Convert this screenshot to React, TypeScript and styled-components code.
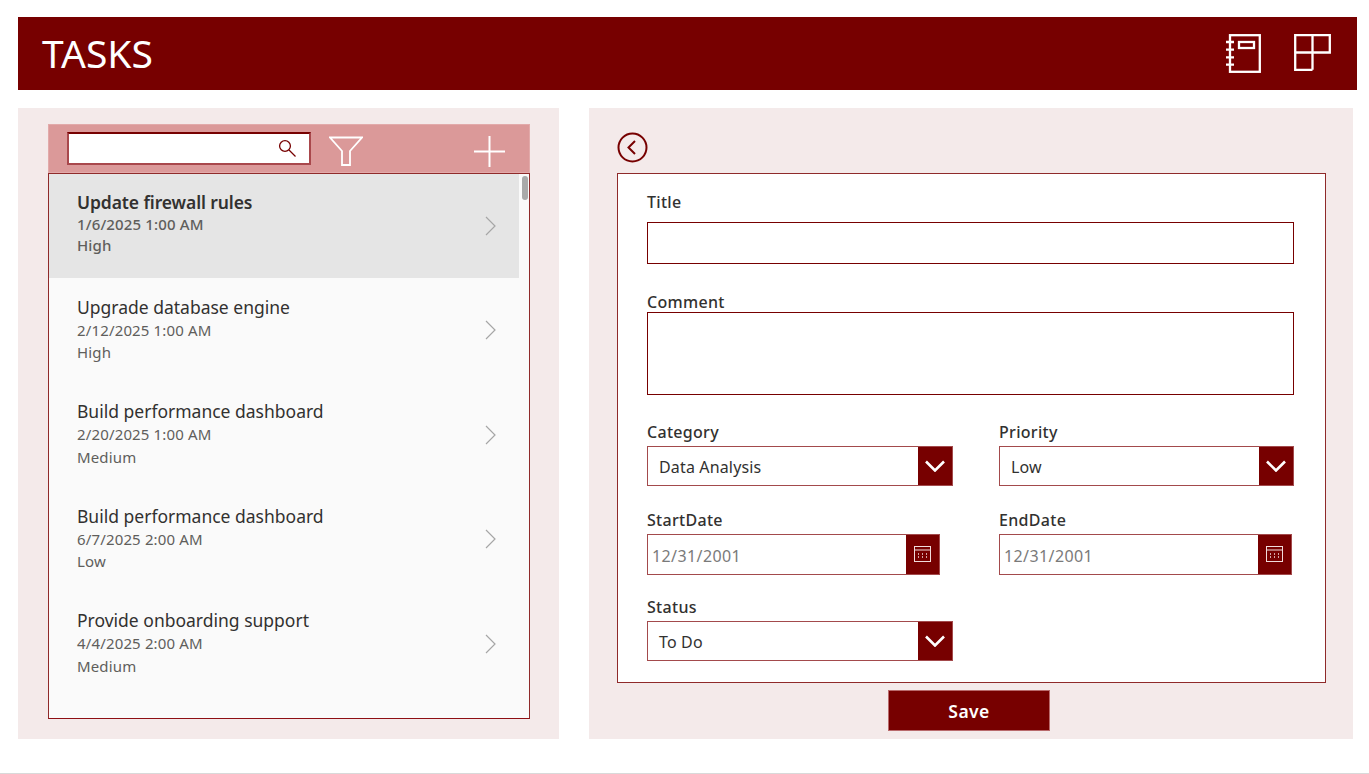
import React from "react";
import styled, { createGlobalStyle } from "styled-components";

const maroon = "#770000";
const line = "#8f2a2a";

const GlobalStyle = createGlobalStyle`
  html, body {
    margin: 0;
    padding: 0;
    background: #ffffff;
    font-family: "Noto Sans", "Open Sans", "Liberation Sans", sans-serif;
    overflow: hidden;
  }
`;

const Screen = styled.div`
  width: 1369px;
  height: 774px;
  box-sizing: border-box;
  padding: 17px 12px 0 18px;
  border-bottom: 1px solid #d9d9d9;
`;

const Header = styled.header`
  height: 73px;
  width: 1339px;
  box-sizing: border-box;
  background: ${maroon};
  color: #fff;
  display: flex;
  align-items: center;
  justify-content: space-between;
  padding: 0 26px 0 24px;
`;

const AppTitle = styled.h1`
  margin: -2px 0 0;
  font-size: 39px;
  font-weight: 400;
`;

const HeaderIcons = styled.div`
  display: flex;
  align-items: flex-start;
  gap: 33px;
  margin-top: -1px;
`;

const Columns = styled.div`
  display: flex;
  gap: 30px;
  margin-top: 18px;
  height: 631px;
`;

const LeftPanel = styled.section`
  width: 541px;
  box-sizing: border-box;
  background: #f4eaea;
  padding: 16px 29px 20px 30px;
  display: flex;
  flex-direction: column;
`;

const Toolbar = styled.div`
  height: 49px;
  box-sizing: border-box;
  background: #db9999;
  border: 1px solid #e2aaaa;
  display: flex;
  align-items: center;
  padding: 0 24px 0 18px;
`;

const SearchBox = styled.div`
  width: 244px;
  height: 33px;
  box-sizing: border-box;
  background: #fff;
  border: 2px solid #a9484c;
  border-top-color: ${maroon};
  display: flex;
  align-items: center;
  justify-content: flex-end;
  padding-right: 12px;
`;

const FilterButton = styled.div`
  display: flex;
  margin: 5px 0 0 18px;
`;

const AddButton = styled.div`
  display: flex;
  margin: 5px 0 0 auto;
`;

const ListBox = styled.div`
  flex: 1;
  position: relative;
  background: #fafafa;
  border: 1px solid ${line};
  border-bottom-color: #8e0f14;
  overflow: hidden;
`;

const Row = styled.div<{ $selected?: boolean }>`
  width: 470px;
  height: ${(p) => (p.$selected ? 103.5 : 104.5)}px;
  margin-bottom: ${(p) => (p.$selected ? 1 : 0)}px;
  box-sizing: border-box;
  padding: 16px 23px 0 28px;
  display: flex;
  align-items: flex-start;
  justify-content: space-between;
  background: ${(p) => (p.$selected ? "#e5e5e5" : "transparent")};
`;

const RowText = styled.div`
  display: flex;
  flex-direction: column;
`;

const RowTitle = styled.div<{ $selected?: boolean }>`
  font-size: 17.5px;
  line-height: 24px;
  color: #323130;
  letter-spacing: ${(p) => (p.$selected ? -0.1 : 0)}px;
  font-weight: ${(p) => (p.$selected ? 600 : 400)};
`;

const RowMeta = styled.div<{ $selected?: boolean }>`
  font-size: 15px;
  line-height: ${(p) => (p.$selected ? 21 : 22.5)}px;
  color: #605e5c;
  letter-spacing: 0.15px;
  font-weight: ${(p) => (p.$selected ? 500 : 400)};
`;

const Chevron = styled.div`
  display: flex;
  margin-top: 25.5px;
`;

const ScrollThumb = styled.div`
  position: absolute;
  top: 2px;
  right: 1px;
  width: 6px;
  height: 24px;
  border-radius: 3px;
  background: #a9a9a9;
`;

const RightPanel = styled.section`
  width: 764px;
  box-sizing: border-box;
  background: #f4eaea;
  padding: 24px 27px 0 28px;
`;

const BackButton = styled.div`
  display: flex;
  height: 41px;
`;

const FormBox = styled.form`
  width: 709px;
  height: 510px;
  box-sizing: border-box;
  background: #fff;
  border: 1px solid ${line};
  padding: 17px 31px 0 29px;
`;

const Label = styled.label`
  display: block;
  font-size: 16px;
  line-height: 22px;
  font-weight: 500;
  color: #323130;
  letter-spacing: 0.3px;
`;

const TextBox = styled.div<{ $height: number; $gap: number; $after: number }>`
  height: ${(p) => p.$height}px;
  box-sizing: border-box;
  border: 1px solid ${maroon};
  margin-top: ${(p) => p.$gap}px;
  margin-bottom: ${(p) => p.$after}px;
`;

const FieldGrid = styled.div`
  display: grid;
  grid-template-columns: 352px 295px;
  grid-auto-rows: 87.5px;
`;

const Field = styled.div`
  display: flex;
  flex-direction: column;
  align-items: flex-start;
`;

const Control = styled.div<{ $width: number; $height: number }>`
  width: ${(p) => p.$width}px;
  height: ${(p) => p.$height}px;
  margin-top: 3px;
  box-sizing: border-box;
  border: 1px solid #a34a4c;
  display: flex;
  align-items: stretch;
  font-size: 16px;
  color: #323130;
`;

const ControlText = styled.div<{ $muted?: boolean }>`
  flex: 1;
  display: flex;
  align-items: center;
  padding: ${(p) => (p.$muted ? "3px 0 0 4px" : "1px 0 0 11px")};
  color: ${(p) => (p.$muted ? "#7a7a7a" : "#323130")};
  letter-spacing: ${(p) => (p.$muted ? 0.4 : 0.15)}px;
`;

const ControlButton = styled.div<{ $width: number }>`
  width: ${(p) => p.$width}px;
  background: ${maroon};
  display: flex;
  align-items: center;
  justify-content: center;
`;

const SaveRow = styled.div`
  display: flex;
  justify-content: center;
  margin-top: 7px;
  padding-right: 6px;
`;

const SaveButton = styled.button`
  width: 162px;
  height: 41px;
  background: ${maroon};
  border: 1px solid #b96a6c;
  color: #fff;
  font-family: inherit;
  font-size: 17.5px;
  font-weight: 600;
  letter-spacing: 0.4px;
  padding: 0 0 0 1px;
`;

const NotebookIcon = () => (
  <svg width="35" height="39" viewBox="0 0 35 39" fill="none" stroke="#fff" strokeWidth="2.3">
    <rect x="4" y="1.2" width="29.8" height="36.6" />
    <rect x="13" y="8" width="15" height="6" />
    <path d="M0 8h8M0 15.7h8M0 23.3h8M0 30.7h8" />
  </svg>
);

const LayoutIcon = () => (
  <svg width="37" height="37" viewBox="0 0 37 37" fill="none" stroke="#fff" strokeWidth="2.3">
    <path d="M1.2 1.2h34.6v17.3H1.2zM18.5 1.2v34.6M1.2 18.5v17.3h17.3" />
  </svg>
);

const SearchIcon = () => (
  <svg width="19" height="19" viewBox="0 0 19 19" fill="none" stroke={maroon} strokeWidth="1.3">
    <circle cx="7" cy="7" r="5.4" />
    <path d="M11 11l6.5 6.5" />
  </svg>
);

const FilterIcon = () => (
  <svg width="34" height="30" viewBox="0 0 34 30" fill="none" stroke="#fff" strokeWidth="1.8">
    <path d="M1 1.5h32L21 15v14h-8V15z" />
  </svg>
);

const PlusIcon = () => (
  <svg width="31" height="31" viewBox="0 0 31 31" stroke="#fff" strokeWidth="2">
    <path d="M0 15.5h31M15.5 0v31" />
  </svg>
);

const ChevronIcon = () => (
  <svg width="11" height="20" viewBox="0 0 11 20" fill="none" stroke="#a6a6a6" strokeWidth="1.2">
    <path d="M1 1l9 9-9 9" />
  </svg>
);

const BackIcon = () => (
  <svg width="31" height="31" viewBox="0 0 31 31" fill="none" stroke={maroon} strokeWidth="2">
    <circle cx="15.5" cy="15.5" r="14" />
    <path d="M18 9l-6.5 6.5L18 22" />
  </svg>
);

const DownIcon = () => (
  <svg width="20" height="12" viewBox="0 0 20 12" fill="none" stroke="#fff" strokeWidth="2.6">
    <path d="M1 1.5l9 9 9-9" />
  </svg>
);

const CalendarIcon = () => (
  <svg width="17" height="16" viewBox="0 0 17 16" fill="none" stroke="#f1dcdc" strokeWidth="1">
    <rect x="0.5" y="0.5" width="16" height="15" />
    <path d="M0.5 4h16" />
    <path d="M4 8h1M8 8h1M12 8h1M4 11h1M8 11h1M12 11h1" strokeWidth="1.4" />
  </svg>
);

const tasks = [
  { title: "Update firewall rules", date: "1/6/2025 1:00 AM", priority: "High" },
  { title: "Upgrade database engine", date: "2/12/2025 1:00 AM", priority: "High" },
  { title: "Build performance dashboard", date: "2/20/2025 1:00 AM", priority: "Medium" },
  { title: "Build performance dashboard", date: "6/7/2025 2:00 AM", priority: "Low" },
  { title: "Provide onboarding support", date: "4/4/2025 2:00 AM", priority: "Medium" },
];

const SelectField: React.FC<{ label: string; value: string; width: number }> = ({ label, value, width }) => (
  <Field>
    <Label>{label}</Label>
    <Control $width={width} $height={40}>
      <ControlText>{value}</ControlText>
      <ControlButton $width={34}>
        <DownIcon />
      </ControlButton>
    </Control>
  </Field>
);

const DateField: React.FC<{ label: string; width: number }> = ({ label, width }) => (
  <Field>
    <Label>{label}</Label>
    <Control $width={width} $height={41}>
      <ControlText $muted>12/31/2001</ControlText>
      <ControlButton $width={33}>
        <CalendarIcon />
      </ControlButton>
    </Control>
  </Field>
);

const App: React.FC = () => {
  return (
    <Screen>
      <GlobalStyle />
      <Header>
        <AppTitle>TASKS</AppTitle>
        <HeaderIcons>
          <NotebookIcon />
          <LayoutIcon />
        </HeaderIcons>
      </Header>
      <Columns>
        <LeftPanel>
          <Toolbar>
            <SearchBox>
              <SearchIcon />
            </SearchBox>
            <FilterButton>
              <FilterIcon />
            </FilterButton>
            <AddButton>
              <PlusIcon />
            </AddButton>
          </Toolbar>
          <ListBox>
            {tasks.map((task, index) => (
              <Row key={index} $selected={index === 0}>
                <RowText>
                  <RowTitle $selected={index === 0}>{task.title}</RowTitle>
                  <RowMeta $selected={index === 0}>{task.date}</RowMeta>
                  <RowMeta $selected={index === 0}>{task.priority}</RowMeta>
                </RowText>
                <Chevron>
                  <ChevronIcon />
                </Chevron>
              </Row>
            ))}
            <ScrollThumb />
          </ListBox>
        </LeftPanel>
        <RightPanel>
          <BackButton>
            <BackIcon />
          </BackButton>
          <FormBox>
            <Label>Title</Label>
            <TextBox $height={42} $gap={9} $after={27} />
            <Label>Comment</Label>
            <TextBox $height={83} $gap={-1} $after={26} />
            <FieldGrid>
              <SelectField label="Category" value="Data Analysis" width={306} />
              <SelectField label="Priority" value="Low" width={295} />
              <DateField label="StartDate" width={293} />
              <DateField label="EndDate" width={293} />
              <SelectField label="Status" value="To Do" width={306} />
            </FieldGrid>
          </FormBox>
          <SaveRow>
            <SaveButton type="button">Save</SaveButton>
          </SaveRow>
        </RightPanel>
      </Columns>
    </Screen>
  );
};

export default App;
